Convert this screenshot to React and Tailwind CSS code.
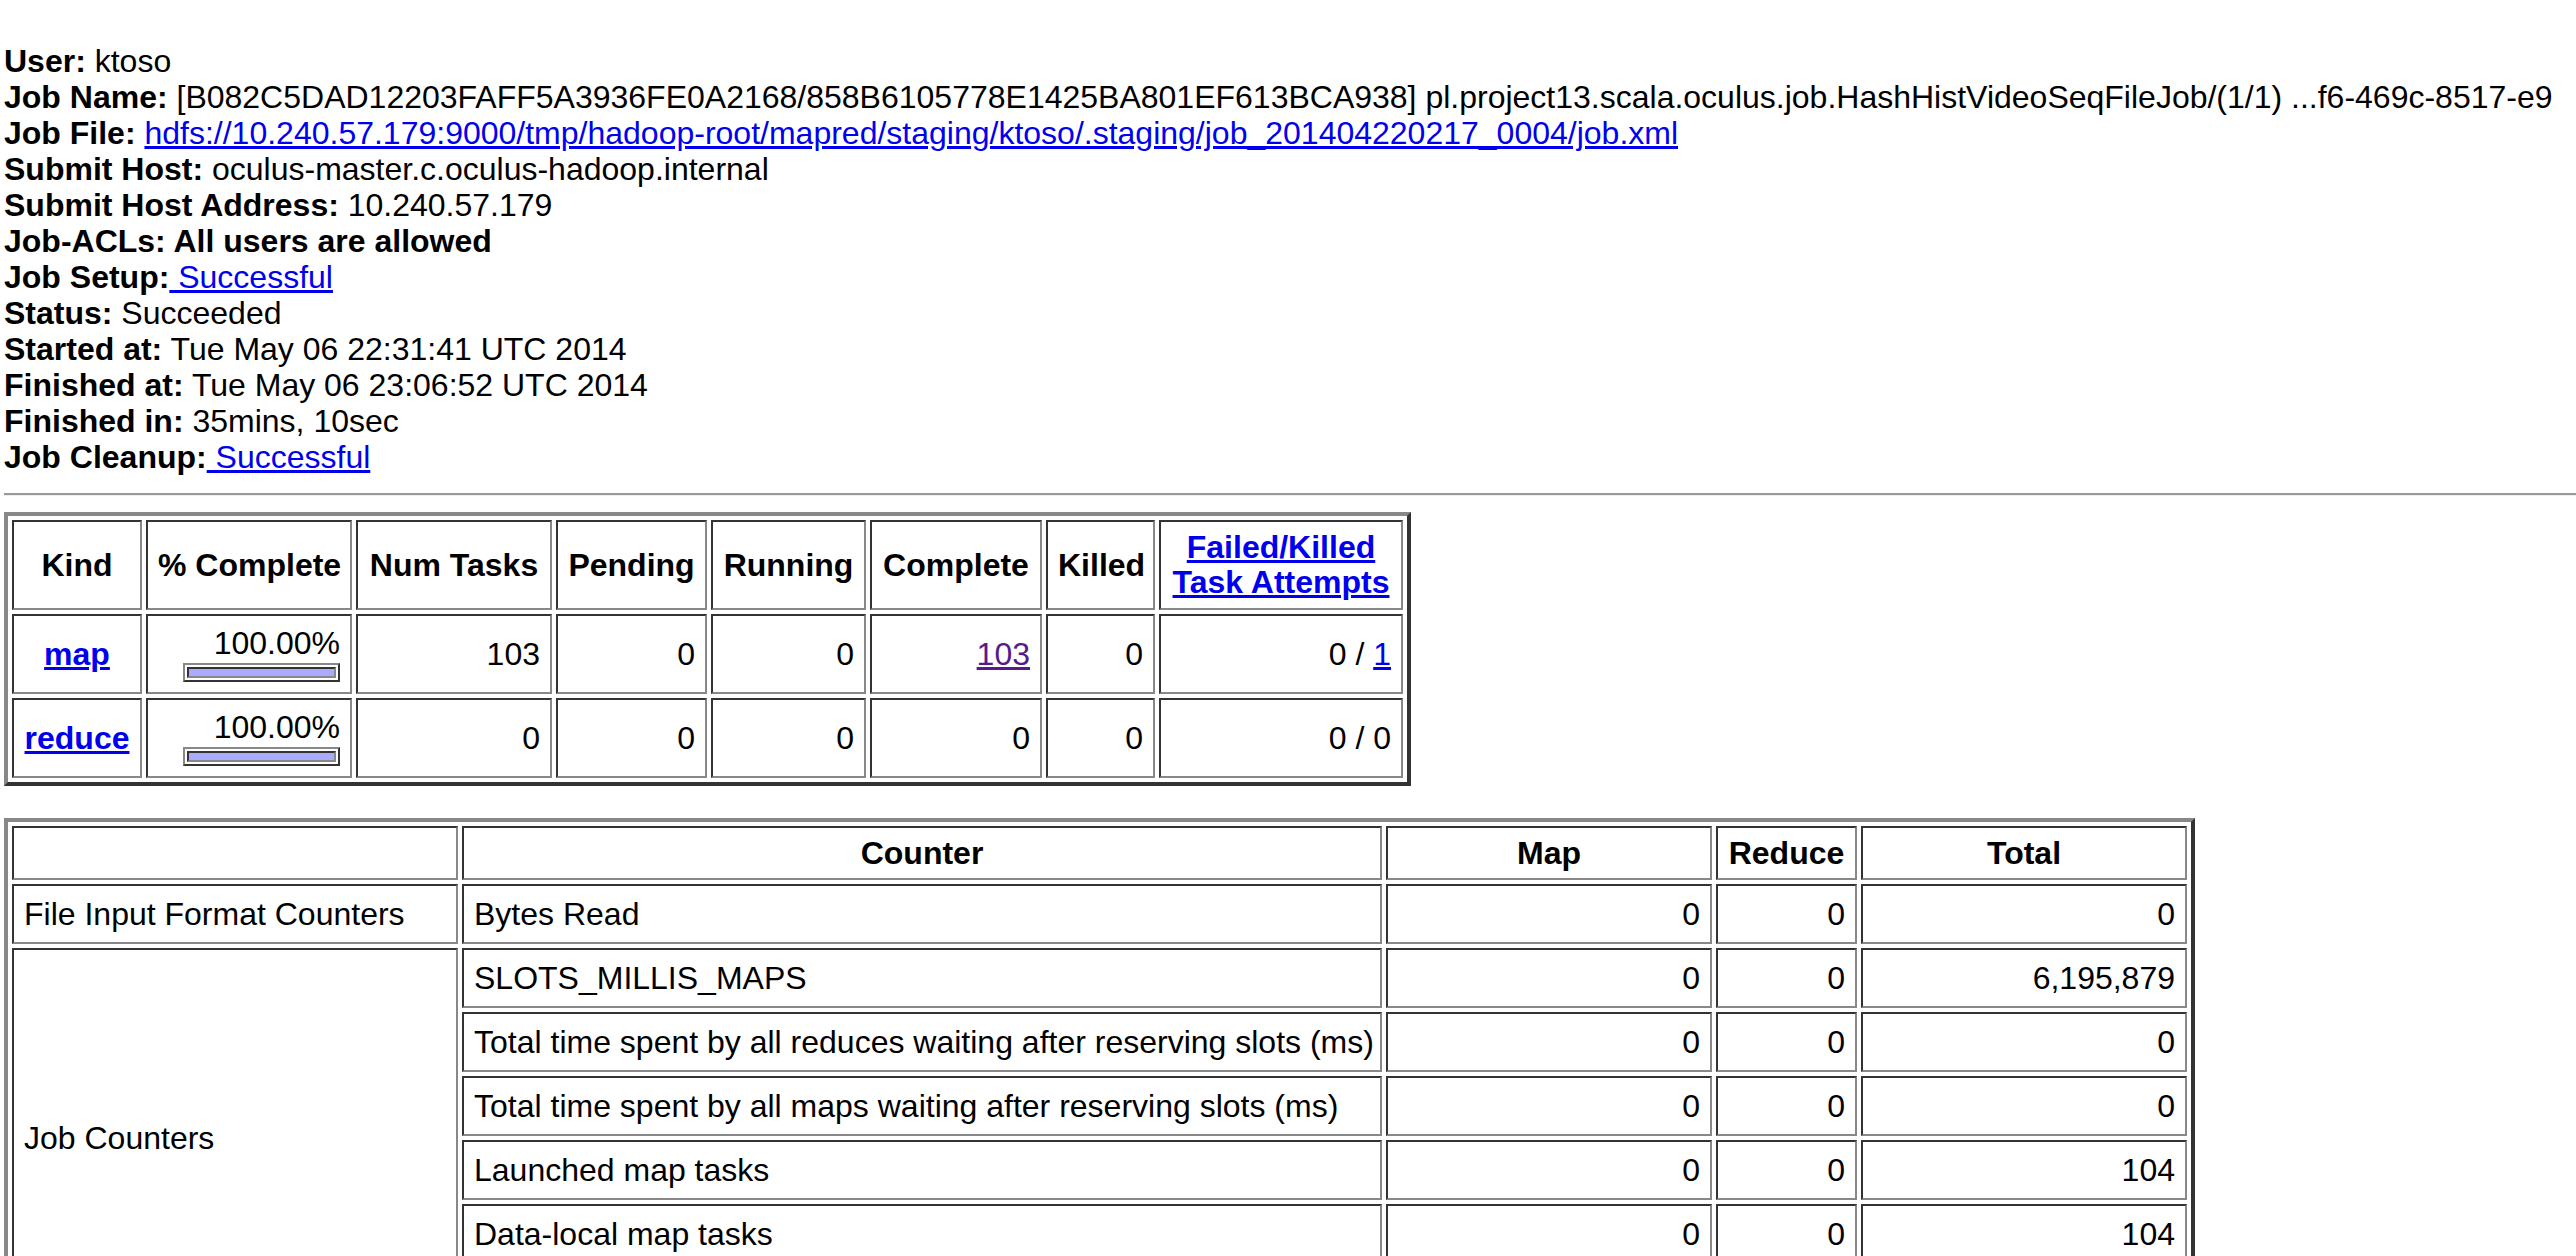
import React from 'react';

const cell = 'border-2 border-t-[#333333] border-l-[#333333] border-r-[#888888] border-b-[#888888] px-[10px] py-0 align-middle';
const outer = 'table-fixed border-separate border-spacing-[4px] border-4 border-t-[#888888] border-l-[#888888] border-r-[#333333] border-b-[#333333]';
const link = 'text-[#0000ee] underline';

const Info = ({ label, children }) => (
    <div className="whitespace-nowrap">
        <b>{label}</b>{children}
    </div>
);

const Bar = ({ pct }) => (
    <div className="ml-auto mt-[2px] mb-[2px] w-[157px] h-[19px] border-2 border-t-[#888888] border-l-[#888888] border-r-[#333333] border-b-[#333333] p-[2px]">
        <div
            className="h-full border-2 border-t-[#333333] border-l-[#333333] border-r-[#888888] border-b-[#888888] bg-[#aaaaff]"
            style={{ width: `${pct}%` }}
        />
    </div>
);

const tasks = [
    { kind: 'map', pct: 100, num: 103, pending: 0, running: 0, complete: 103, killed: 0, failed: 0, killedAttempts: 1 },
    { kind: 'reduce', pct: 100, num: 0, pending: 0, running: 0, complete: 0, killed: 0, failed: 0, killedAttempts: 0 },
];

const counters = [
    {
        group: 'File Input Format Counters',
        rows: [['Bytes Read', '0', '0', '0']],
    },
    {
        group: 'Job Counters',
        rows: [
            ['SLOTS_MILLIS_MAPS', '0', '0', '6,195,879'],
            ['Total time spent by all reduces waiting after reserving slots (ms)', '0', '0', '0'],
            ['Total time spent by all maps waiting after reserving slots (ms)', '0', '0', '0'],
            ['Launched map tasks', '0', '0', '104'],
            ['Data-local map tasks', '0', '0', '104'],
            ['SLOTS_MILLIS_REDUCES', '0', '0', '0'],
        ],
    },
];

const TaskTable = () => (
    <table className={`${outer} w-[1407px] mt-[16px]`}>
        <thead>
            <tr>
                <th className={`${cell} w-[130px] h-[90px] text-center whitespace-nowrap`}>Kind</th>
                <th className={`${cell} w-[206px] text-center whitespace-nowrap`}>% Complete</th>
                <th className={`${cell} w-[196px] text-center whitespace-nowrap`}>Num Tasks</th>
                <th className={`${cell} w-[151px] text-center whitespace-nowrap`}>Pending</th>
                <th className={`${cell} w-[155px] text-center whitespace-nowrap`}>Running</th>
                <th className={`${cell} w-[172px] text-center whitespace-nowrap`}>Complete</th>
                <th className={`${cell} w-[109px] text-center whitespace-nowrap`}>Killed</th>
                <th className={`${cell} w-[244px] text-center leading-[35px] whitespace-nowrap`}>
                    <a className={link}>Failed/Killed<br />Task Attempts</a>
                </th>
            </tr>
        </thead>
        <tbody>
            {tasks.map((t) => (
                <tr key={t.kind}>
                    <td className={`${cell} h-[80px] text-center`}>
                        <a className={`${link} font-bold`}>{t.kind}</a>
                    </td>
                    <td className={`${cell} text-right`}>
                        <div>{t.pct.toFixed(2)}%</div>
                        <Bar pct={t.pct} />
                    </td>
                    <td className={`${cell} text-right`}>{t.num}</td>
                    <td className={`${cell} text-right`}>{t.pending}</td>
                    <td className={`${cell} text-right`}>{t.running}</td>
                    <td className={`${cell} text-right`}>
                        {t.complete > 0 ? <a className="text-[#551a8b] underline">{t.complete}</a> : t.complete}
                    </td>
                    <td className={`${cell} text-right`}>{t.killed}</td>
                    <td className={`${cell} text-right whitespace-nowrap`}>
                        {t.failed} / {t.killedAttempts > 0 ? <a className={link}>{t.killedAttempts}</a> : t.killedAttempts}
                    </td>
                </tr>
            ))}
        </tbody>
    </table>
);

const CounterTable = () => (
    <table className={`${outer} w-[2191px] mt-[32px]`}>
        <thead>
            <tr>
                <th className={`${cell} w-[446px] h-[54px]`}></th>
                <th className={`${cell} w-[920px] text-center`}>Counter</th>
                <th className={`${cell} w-[326px] text-center`}>Map</th>
                <th className={`${cell} w-[141px] text-center`}>Reduce</th>
                <th className={`${cell} w-[326px] text-center`}>Total</th>
            </tr>
        </thead>
        <tbody>
            {counters.map((g) =>
                g.rows.map((r, i) => (
                    <tr key={g.group + r[0]}>
                        {i === 0 && (
                            <td rowSpan={g.rows.length} className={`${cell} text-left whitespace-nowrap`}>
                                {g.group}
                            </td>
                        )}
                        <td className={`${cell} h-[60px] text-left whitespace-nowrap`}>{r[0]}</td>
                        <td className={`${cell} text-right`}>{r[1]}</td>
                        <td className={`${cell} text-right`}>{r[2]}</td>
                        <td className={`${cell} text-right`}>{r[3]}</td>
                    </tr>
                ))
            )}
        </tbody>
    </table>
);

export default function App() {
    return (
        <div className="h-screen overflow-hidden bg-white text-black text-[32px] leading-[36px] font-['Liberation_Sans',Arial,Helvetica,sans-serif]">
            <div className="pl-[4px] pt-[43px]">
                <Info label="User:"> ktoso</Info>
                <Info label="Job Name:">
                    {' '}[B082C5DAD12203FAFF5A3936FE0A2168/858B6105778E1425BA801EF613BCA938] pl.project13.scala.oculus.job.HashHistVideoSeqFileJob/(1/1) ...f6-469c-8517-e9
                </Info>
                <Info label="Job File:">
                    {' '}<a className={link}>hdfs://10.240.57.179:9000/tmp/hadoop-root/mapred/staging/ktoso/.staging/job_201404220217_0004/job.xml</a>
                </Info>
                <Info label="Submit Host:"> oculus-master.c.oculus-hadoop.internal</Info>
                <Info label="Submit Host Address:"> 10.240.57.179</Info>
                <Info label="Job-ACLs: All users are allowed" />
                <Info label="Job Setup:">
                    <a className={link}> Successful</a>
                </Info>
                <Info label="Status:"> Succeeded</Info>
                <Info label="Started at:"> Tue May 06 22:31:41 UTC 2014</Info>
                <Info label="Finished at:"> Tue May 06 23:06:52 UTC 2014</Info>
                <Info label="Finished in:"> 35mins, 10sec</Info>
                <Info label="Job Cleanup:">
                    <a className={link}> Successful</a>
                </Info>

                <hr className="mt-[18px] h-0 border-0 border-t-2 border-t-[#999999] border-b border-b-[#eeeeee]" />

                <TaskTable />
                <CounterTable />
            </div>
        </div>
    );
}
